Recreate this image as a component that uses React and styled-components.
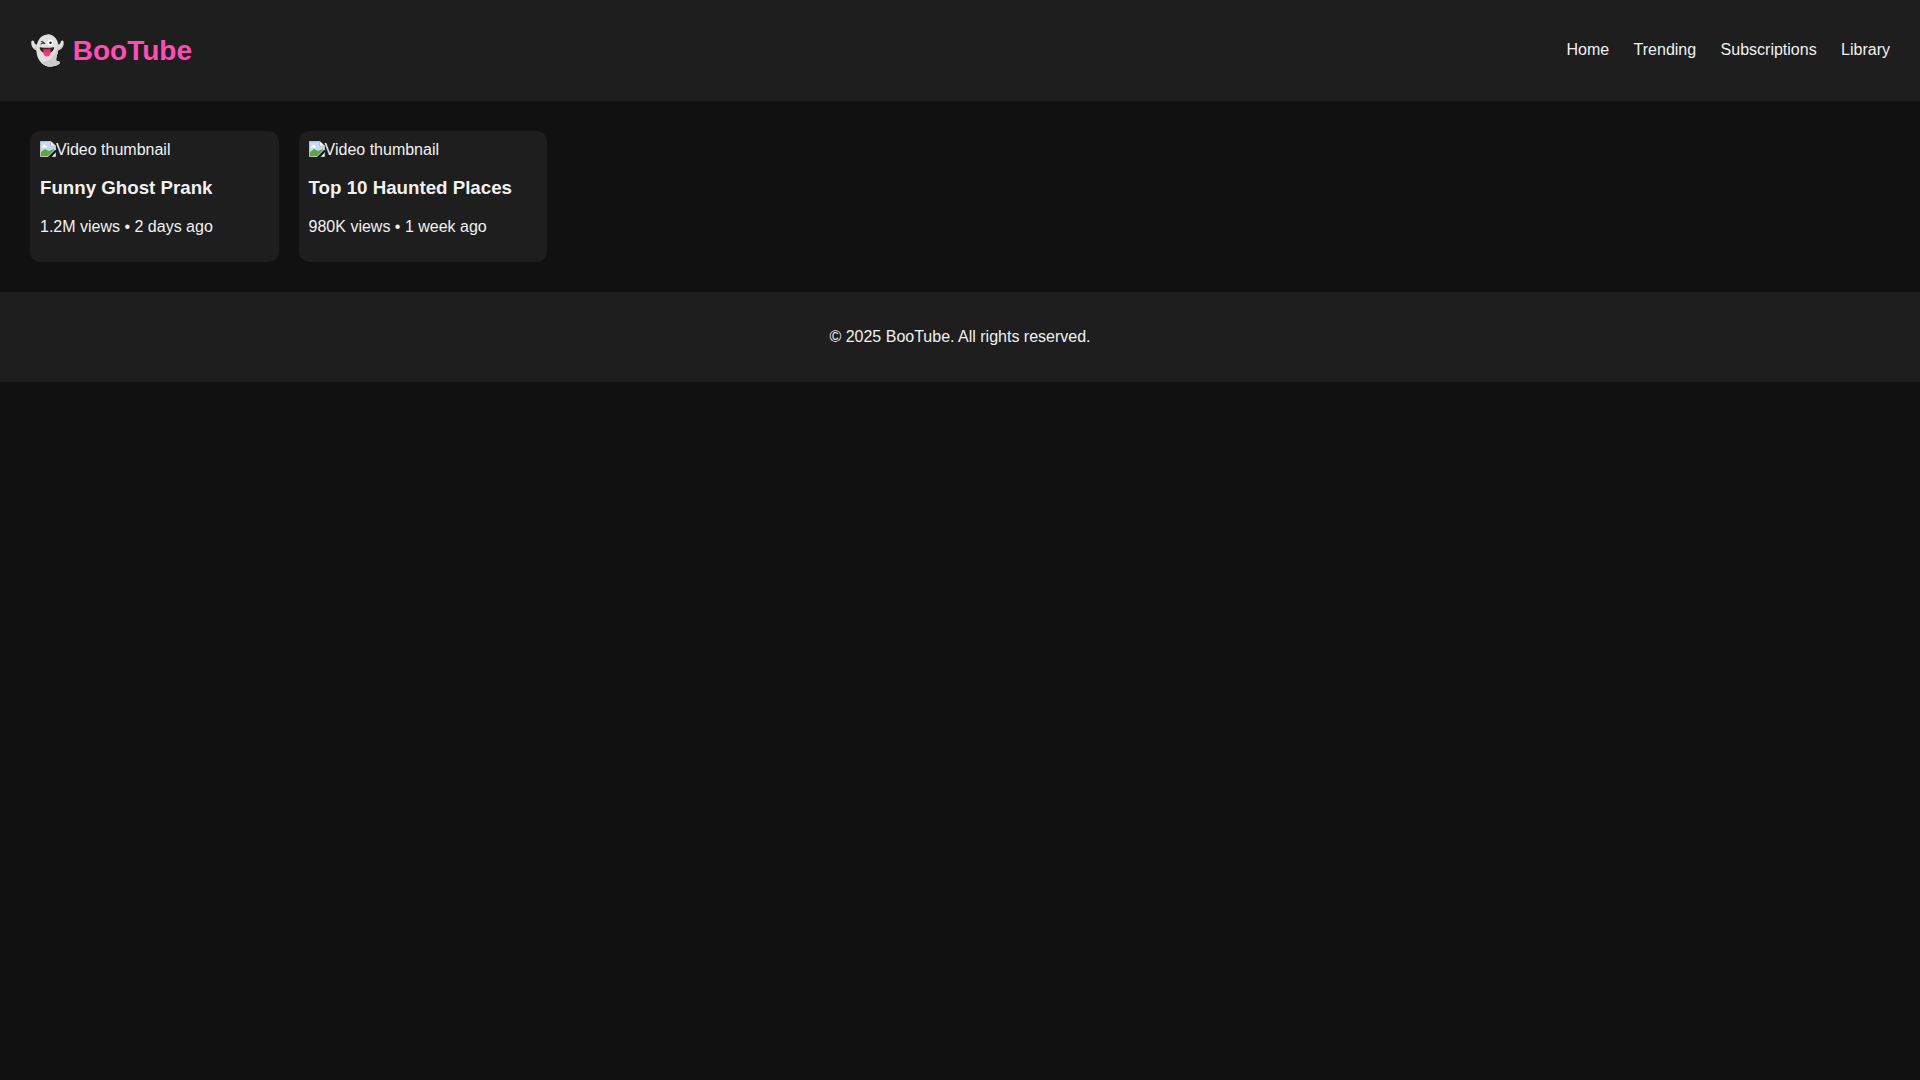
import React from "react";
import styled, { createGlobalStyle } from "styled-components";

const Global = createGlobalStyle`
  html, body { margin: 0; padding: 0; background: #111111; }
  body { font-family: "Liberation Sans", Arial, sans-serif; color: #f1f1f1; }
`;
const Header = styled.header`
  display: flex; justify-content: space-between; align-items: center;
  background: #1e1e1e; padding: 34px 30px;
`;
const Logo = styled.div`
  font-size: 28px; font-weight: 700; color: #ff4db8;
`;
const Nav = styled.nav`
  display: flex; gap: 24.45px; font-size: 16px; padding-bottom: 2px;
`;
const NavLink = styled.a`
  color: #f1f1f1; text-decoration: none;
`;
const Main = styled.main`
  display: grid; grid-template-columns: repeat(auto-fill, minmax(248px, 1fr)); gap: 20px; padding: 30px;
`;
const Card = styled.article`
  background: #1e1e1e; border-radius: 10px; padding: 10px;
`;
const Thumb = styled.div`
  display: flex; align-items: flex-start; font-size: 16px; line-height: 18px; height: 18px;
`;
const Title = styled.h3`
  margin: 17.72px 0 19.72px; font-size: 18.72px; font-weight: 700;
`;
const Meta = styled.p`
  margin: 0 0 16px; font-size: 16px; line-height: 18px;
`;
const Footer = styled.footer`
  background: #1e1e1e; padding: 36px 20px; text-align: center; font-size: 16px; line-height: 18px;
`;
const BrokenIcon = () => (
  <svg width="16" height="16" viewBox="0 0 16 16">
    <path d="M0.5 0.5H11L15.5 5V15.5H0.5Z" fill="#dfe6f5" stroke="#c0c0c0" />
    <path d="M1 1H10V5H15V9L9 15H1Z" fill="#c6d8f8" />
    <path d="M1 15V11L5 8L9 10L14 8V9L8 15Z" fill="#5aa83c" />
    <path d="M3 5a1.5 1.5 0 0 1 3 0h1v1.5H2V5Z" fill="#fff" />
    <path d="M8 16L15 9L16 9.5V11L11.5 16Z" fill="#111111" />
    <path d="M10.5 0.5V5H15.5" fill="#fff" stroke="#c0c0c0" />
  </svg>
);
const videos = [
  { title: "Funny Ghost Prank", meta: "1.2M views • 2 days ago" },
  { title: "Top 10 Haunted Places", meta: "980K views • 1 week ago" },
];
export default function App() {
  return (
    <>
      <Global />
      <Header>
        <Logo>👻 BooTube</Logo>
        <Nav>
          {["Home", "Trending", "Subscriptions", "Library"].map((n) => (
            <NavLink href="#" key={n}>{n}</NavLink>
          ))}
        </Nav>
      </Header>
      <Main>
        {videos.map((v) => (
          <Card key={v.title}>
            <Thumb><BrokenIcon />Video thumbnail</Thumb>
            <Title>{v.title}</Title>
            <Meta>{v.meta}</Meta>
          </Card>
        ))}
      </Main>
      <Footer>© 2025 BooTube. All rights reserved.</Footer>
    </>
  );
}
